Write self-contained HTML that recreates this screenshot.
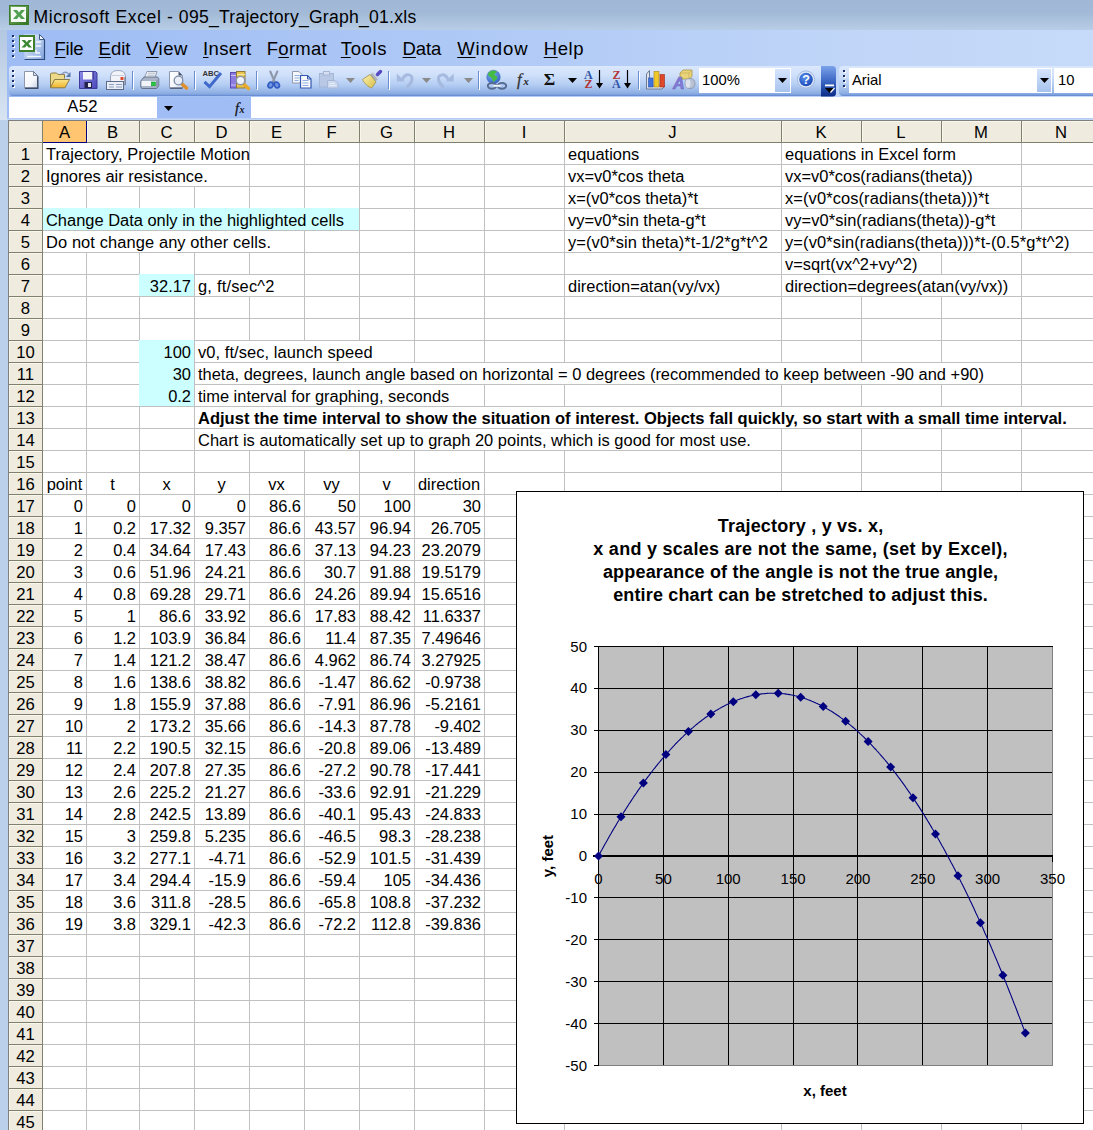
<!DOCTYPE html>
<html lang="en"><head><meta charset="utf-8"><title>Microsoft Excel - 095_Trajectory_Graph_01.xls</title>
<style>
*{box-sizing:border-box;margin:0;padding:0}
html,body{width:1093px;height:1130px;overflow:hidden;background:#fff}
body{position:relative;font-family:"Liberation Sans",Arial,sans-serif;font-size:16.67px;color:#000}
.abs,.abs>*{position:absolute}
#win{position:absolute;left:0;top:0;width:1093px;height:1130px;overflow:hidden}
#win>div,#win>svg{position:absolute}
#lb{left:0;top:0;width:8px;height:1130px;background:#bbd0ea}
#lb2{left:0;top:30px;width:7px;height:90px;background:linear-gradient(#b3c7e2,#c6d6ea 50%,#d8e4f2)}
#title{left:0;top:0;width:1093px;height:30px;background:linear-gradient(#a0b7d5 0,#a2bad7 42%,#b8cde6 100%)}
#title span{position:absolute;left:33.5px;top:5px;font-size:17.6px;line-height:24px;white-space:nowrap}
#menu{left:7px;top:30px;width:1086px;height:36px;background:linear-gradient(90deg,#9ebcf4 0,#afc9f6 42%,#c1d6f8 80%,#c6daf9 100%)}
#menu span{position:absolute;top:7px;font-size:18.5px;line-height:24px;white-space:nowrap}
#menu u{text-decoration:underline;text-underline-offset:2px;text-decoration-thickness:1px}
.tbar{height:30px;top:66px;border-radius:4px 0 0 4px;background:linear-gradient(#dbe8fc,#cfe0fa 30%,#b7cff4 60%,#8fb0e4 90%,#7c9fdc 96%,#5b82cc)}
#tb{left:9px;width:815px}
#tb2{left:839px;width:254px}
#tbbg{left:7px;top:64px;width:1086px;height:33px;background:linear-gradient(90deg,#9ebcf4 0,#afc9f6 42%,#c1d6f8 80%,#c6daf9 100%)}
#fbar{left:7px;top:97px;width:1086px;height:23px;background:#a0bef5}
#fbar div{position:absolute}
.ui{position:absolute;font-size:14.8px;line-height:20px;white-space:nowrap}
.hdr{background:#efebde}
#grid{left:0;top:0;width:1093px;height:1130px}
#grid div{position:absolute}
.ch{top:121px;height:21px;line-height:24px;text-align:center;font-size:16.67px}
.rh{box-shadow:inset 1px 1px 0 #f9f6ea;left:9px;width:33px;height:21px;line-height:24px;text-align:center;font-size:16.67px;background:#efebde}
.t{height:22px;line-height:23px;white-space:nowrap;font-size:16.45px}
.b{font-size:16.52px}
.r{text-align:right}
.c{text-align:center}
.b{font-weight:bold}
.hl{background:#ccffff}
.vl{width:1px;background:#c0c0c0}
.hline{height:1px;background:#c0c0c0}
</style></head><body><div id="win">

<div id="grid">
<div style="left:9px;top:120px;width:1084px;height:1010px;background:#fff"></div>
<div class="hdr" style="left:9px;top:121px;width:1084px;height:21px"></div>
<div class="hdr" style="left:9px;top:143px;width:33px;height:987px"></div>
<div class="hline" style="left:43px;top:164px;width:1050px"></div>
<div class="hline" style="left:43px;top:186px;width:1050px"></div>
<div class="hline" style="left:43px;top:208px;width:1050px"></div>
<div class="hline" style="left:43px;top:230px;width:1050px"></div>
<div class="hline" style="left:43px;top:252px;width:1050px"></div>
<div class="hline" style="left:43px;top:274px;width:1050px"></div>
<div class="hline" style="left:43px;top:296px;width:1050px"></div>
<div class="hline" style="left:43px;top:318px;width:1050px"></div>
<div class="hline" style="left:43px;top:340px;width:1050px"></div>
<div class="hline" style="left:43px;top:362px;width:1050px"></div>
<div class="hline" style="left:43px;top:384px;width:1050px"></div>
<div class="hline" style="left:43px;top:406px;width:1050px"></div>
<div class="hline" style="left:43px;top:428px;width:1050px"></div>
<div class="hline" style="left:43px;top:450px;width:1050px"></div>
<div class="hline" style="left:43px;top:472px;width:1050px"></div>
<div class="hline" style="left:43px;top:494px;width:1050px"></div>
<div class="hline" style="left:43px;top:516px;width:1050px"></div>
<div class="hline" style="left:43px;top:538px;width:1050px"></div>
<div class="hline" style="left:43px;top:560px;width:1050px"></div>
<div class="hline" style="left:43px;top:582px;width:1050px"></div>
<div class="hline" style="left:43px;top:604px;width:1050px"></div>
<div class="hline" style="left:43px;top:626px;width:1050px"></div>
<div class="hline" style="left:43px;top:648px;width:1050px"></div>
<div class="hline" style="left:43px;top:670px;width:1050px"></div>
<div class="hline" style="left:43px;top:692px;width:1050px"></div>
<div class="hline" style="left:43px;top:714px;width:1050px"></div>
<div class="hline" style="left:43px;top:736px;width:1050px"></div>
<div class="hline" style="left:43px;top:758px;width:1050px"></div>
<div class="hline" style="left:43px;top:780px;width:1050px"></div>
<div class="hline" style="left:43px;top:802px;width:1050px"></div>
<div class="hline" style="left:43px;top:824px;width:1050px"></div>
<div class="hline" style="left:43px;top:846px;width:1050px"></div>
<div class="hline" style="left:43px;top:868px;width:1050px"></div>
<div class="hline" style="left:43px;top:890px;width:1050px"></div>
<div class="hline" style="left:43px;top:912px;width:1050px"></div>
<div class="hline" style="left:43px;top:934px;width:1050px"></div>
<div class="hline" style="left:43px;top:956px;width:1050px"></div>
<div class="hline" style="left:43px;top:978px;width:1050px"></div>
<div class="hline" style="left:43px;top:1000px;width:1050px"></div>
<div class="hline" style="left:43px;top:1022px;width:1050px"></div>
<div class="hline" style="left:43px;top:1044px;width:1050px"></div>
<div class="hline" style="left:43px;top:1066px;width:1050px"></div>
<div class="hline" style="left:43px;top:1088px;width:1050px"></div>
<div class="hline" style="left:43px;top:1110px;width:1050px"></div>
<div class="hline" style="left:43px;top:1132px;width:1050px"></div>
<div class="vl" style="left:86px;top:187px;height:22px"></div>
<div class="vl" style="left:86px;top:253px;height:880px"></div>
<div class="vl" style="left:139px;top:187px;height:22px"></div>
<div class="vl" style="left:139px;top:253px;height:880px"></div>
<div class="vl" style="left:194px;top:187px;height:22px"></div>
<div class="vl" style="left:194px;top:253px;height:880px"></div>
<div class="vl" style="left:249px;top:143px;height:66px"></div>
<div class="vl" style="left:249px;top:253px;height:22px"></div>
<div class="vl" style="left:249px;top:297px;height:44px"></div>
<div class="vl" style="left:249px;top:451px;height:682px"></div>
<div class="vl" style="left:304px;top:143px;height:66px"></div>
<div class="vl" style="left:304px;top:231px;height:110px"></div>
<div class="vl" style="left:304px;top:451px;height:682px"></div>
<div class="vl" style="left:359px;top:143px;height:198px"></div>
<div class="vl" style="left:359px;top:451px;height:682px"></div>
<div class="vl" style="left:414px;top:143px;height:220px"></div>
<div class="vl" style="left:414px;top:451px;height:682px"></div>
<div class="vl" style="left:484px;top:143px;height:220px"></div>
<div class="vl" style="left:484px;top:385px;height:22px"></div>
<div class="vl" style="left:484px;top:451px;height:682px"></div>
<div class="vl" style="left:564px;top:143px;height:220px"></div>
<div class="vl" style="left:564px;top:385px;height:22px"></div>
<div class="vl" style="left:564px;top:451px;height:682px"></div>
<div class="vl" style="left:781px;top:143px;height:220px"></div>
<div class="vl" style="left:781px;top:385px;height:22px"></div>
<div class="vl" style="left:781px;top:429px;height:704px"></div>
<div class="vl" style="left:861px;top:297px;height:66px"></div>
<div class="vl" style="left:861px;top:385px;height:22px"></div>
<div class="vl" style="left:861px;top:429px;height:704px"></div>
<div class="vl" style="left:941px;top:253px;height:22px"></div>
<div class="vl" style="left:941px;top:297px;height:66px"></div>
<div class="vl" style="left:941px;top:385px;height:22px"></div>
<div class="vl" style="left:941px;top:429px;height:704px"></div>
<div class="vl" style="left:1021px;top:143px;height:88px"></div>
<div class="vl" style="left:1021px;top:253px;height:154px"></div>
<div class="vl" style="left:1021px;top:429px;height:704px"></div>
<div class="hl" style="left:43px;top:208px;width:316px;height:22px"></div>
<div class="hl" style="left:139px;top:274px;width:55px;height:22px"></div>
<div class="hl" style="left:139px;top:340px;width:55px;height:66px"></div>
<div style="left:8px;top:120px;width:1085px;height:1px;background:#7f7f7f"></div>
<div style="left:8px;top:120px;width:1px;height:1010px;background:#7f7f7f"></div>
<div style="left:9px;top:142px;width:1084px;height:1px;background:#80806f"></div>
<div style="left:42px;top:121px;width:1px;height:1009px;background:#80806f"></div>
<div style="left:43px;top:121px;width:43px;height:21px;background:#ffc571"></div>
<div style="left:86px;top:121px;width:1px;height:22px;background:#000080"></div>
<div style="left:43px;top:142px;width:43px;height:1px;background:#000080"></div>
<div class="ch" style="left:43px;width:43px">A</div>
<div style="left:87px;top:121px;width:52px;height:1px;background:#f9f6ea"></div><div style="left:87px;top:121px;width:1px;height:21px;background:#f9f6ea"></div>
<div style="left:139px;top:121px;width:1px;height:21px;background:#80806f"></div>
<div class="ch" style="left:86px;width:53px">B</div>
<div style="left:140px;top:121px;width:54px;height:1px;background:#f9f6ea"></div><div style="left:140px;top:121px;width:1px;height:21px;background:#f9f6ea"></div>
<div style="left:194px;top:121px;width:1px;height:21px;background:#80806f"></div>
<div class="ch" style="left:139px;width:55px">C</div>
<div style="left:195px;top:121px;width:54px;height:1px;background:#f9f6ea"></div><div style="left:195px;top:121px;width:1px;height:21px;background:#f9f6ea"></div>
<div style="left:249px;top:121px;width:1px;height:21px;background:#80806f"></div>
<div class="ch" style="left:194px;width:55px">D</div>
<div style="left:250px;top:121px;width:54px;height:1px;background:#f9f6ea"></div><div style="left:250px;top:121px;width:1px;height:21px;background:#f9f6ea"></div>
<div style="left:304px;top:121px;width:1px;height:21px;background:#80806f"></div>
<div class="ch" style="left:249px;width:55px">E</div>
<div style="left:305px;top:121px;width:54px;height:1px;background:#f9f6ea"></div><div style="left:305px;top:121px;width:1px;height:21px;background:#f9f6ea"></div>
<div style="left:359px;top:121px;width:1px;height:21px;background:#80806f"></div>
<div class="ch" style="left:304px;width:55px">F</div>
<div style="left:360px;top:121px;width:54px;height:1px;background:#f9f6ea"></div><div style="left:360px;top:121px;width:1px;height:21px;background:#f9f6ea"></div>
<div style="left:414px;top:121px;width:1px;height:21px;background:#80806f"></div>
<div class="ch" style="left:359px;width:55px">G</div>
<div style="left:415px;top:121px;width:69px;height:1px;background:#f9f6ea"></div><div style="left:415px;top:121px;width:1px;height:21px;background:#f9f6ea"></div>
<div style="left:484px;top:121px;width:1px;height:21px;background:#80806f"></div>
<div class="ch" style="left:414px;width:70px">H</div>
<div style="left:485px;top:121px;width:79px;height:1px;background:#f9f6ea"></div><div style="left:485px;top:121px;width:1px;height:21px;background:#f9f6ea"></div>
<div style="left:564px;top:121px;width:1px;height:21px;background:#80806f"></div>
<div class="ch" style="left:484px;width:80px">I</div>
<div style="left:565px;top:121px;width:216px;height:1px;background:#f9f6ea"></div><div style="left:565px;top:121px;width:1px;height:21px;background:#f9f6ea"></div>
<div style="left:781px;top:121px;width:1px;height:21px;background:#80806f"></div>
<div class="ch" style="left:564px;width:217px">J</div>
<div style="left:782px;top:121px;width:79px;height:1px;background:#f9f6ea"></div><div style="left:782px;top:121px;width:1px;height:21px;background:#f9f6ea"></div>
<div style="left:861px;top:121px;width:1px;height:21px;background:#80806f"></div>
<div class="ch" style="left:781px;width:80px">K</div>
<div style="left:862px;top:121px;width:79px;height:1px;background:#f9f6ea"></div><div style="left:862px;top:121px;width:1px;height:21px;background:#f9f6ea"></div>
<div style="left:941px;top:121px;width:1px;height:21px;background:#80806f"></div>
<div class="ch" style="left:861px;width:80px">L</div>
<div style="left:942px;top:121px;width:79px;height:1px;background:#f9f6ea"></div><div style="left:942px;top:121px;width:1px;height:21px;background:#f9f6ea"></div>
<div style="left:1021px;top:121px;width:1px;height:21px;background:#80806f"></div>
<div class="ch" style="left:941px;width:80px">M</div>
<div style="left:1022px;top:121px;width:71px;height:1px;background:#f9f6ea"></div><div style="left:1022px;top:121px;width:1px;height:21px;background:#f9f6ea"></div>
<div class="ch" style="left:1021px;width:80px">N</div>
<div class="rh" style="top:143px">1</div>
<div style="left:9px;top:164px;width:33px;height:1px;background:#80806f"></div>
<div class="rh" style="top:165px">2</div>
<div style="left:9px;top:186px;width:33px;height:1px;background:#80806f"></div>
<div class="rh" style="top:187px">3</div>
<div style="left:9px;top:208px;width:33px;height:1px;background:#80806f"></div>
<div class="rh" style="top:209px">4</div>
<div style="left:9px;top:230px;width:33px;height:1px;background:#80806f"></div>
<div class="rh" style="top:231px">5</div>
<div style="left:9px;top:252px;width:33px;height:1px;background:#80806f"></div>
<div class="rh" style="top:253px">6</div>
<div style="left:9px;top:274px;width:33px;height:1px;background:#80806f"></div>
<div class="rh" style="top:275px">7</div>
<div style="left:9px;top:296px;width:33px;height:1px;background:#80806f"></div>
<div class="rh" style="top:297px">8</div>
<div style="left:9px;top:318px;width:33px;height:1px;background:#80806f"></div>
<div class="rh" style="top:319px">9</div>
<div style="left:9px;top:340px;width:33px;height:1px;background:#80806f"></div>
<div class="rh" style="top:341px">10</div>
<div style="left:9px;top:362px;width:33px;height:1px;background:#80806f"></div>
<div class="rh" style="top:363px">11</div>
<div style="left:9px;top:384px;width:33px;height:1px;background:#80806f"></div>
<div class="rh" style="top:385px">12</div>
<div style="left:9px;top:406px;width:33px;height:1px;background:#80806f"></div>
<div class="rh" style="top:407px">13</div>
<div style="left:9px;top:428px;width:33px;height:1px;background:#80806f"></div>
<div class="rh" style="top:429px">14</div>
<div style="left:9px;top:450px;width:33px;height:1px;background:#80806f"></div>
<div class="rh" style="top:451px">15</div>
<div style="left:9px;top:472px;width:33px;height:1px;background:#80806f"></div>
<div class="rh" style="top:473px">16</div>
<div style="left:9px;top:494px;width:33px;height:1px;background:#80806f"></div>
<div class="rh" style="top:495px">17</div>
<div style="left:9px;top:516px;width:33px;height:1px;background:#80806f"></div>
<div class="rh" style="top:517px">18</div>
<div style="left:9px;top:538px;width:33px;height:1px;background:#80806f"></div>
<div class="rh" style="top:539px">19</div>
<div style="left:9px;top:560px;width:33px;height:1px;background:#80806f"></div>
<div class="rh" style="top:561px">20</div>
<div style="left:9px;top:582px;width:33px;height:1px;background:#80806f"></div>
<div class="rh" style="top:583px">21</div>
<div style="left:9px;top:604px;width:33px;height:1px;background:#80806f"></div>
<div class="rh" style="top:605px">22</div>
<div style="left:9px;top:626px;width:33px;height:1px;background:#80806f"></div>
<div class="rh" style="top:627px">23</div>
<div style="left:9px;top:648px;width:33px;height:1px;background:#80806f"></div>
<div class="rh" style="top:649px">24</div>
<div style="left:9px;top:670px;width:33px;height:1px;background:#80806f"></div>
<div class="rh" style="top:671px">25</div>
<div style="left:9px;top:692px;width:33px;height:1px;background:#80806f"></div>
<div class="rh" style="top:693px">26</div>
<div style="left:9px;top:714px;width:33px;height:1px;background:#80806f"></div>
<div class="rh" style="top:715px">27</div>
<div style="left:9px;top:736px;width:33px;height:1px;background:#80806f"></div>
<div class="rh" style="top:737px">28</div>
<div style="left:9px;top:758px;width:33px;height:1px;background:#80806f"></div>
<div class="rh" style="top:759px">29</div>
<div style="left:9px;top:780px;width:33px;height:1px;background:#80806f"></div>
<div class="rh" style="top:781px">30</div>
<div style="left:9px;top:802px;width:33px;height:1px;background:#80806f"></div>
<div class="rh" style="top:803px">31</div>
<div style="left:9px;top:824px;width:33px;height:1px;background:#80806f"></div>
<div class="rh" style="top:825px">32</div>
<div style="left:9px;top:846px;width:33px;height:1px;background:#80806f"></div>
<div class="rh" style="top:847px">33</div>
<div style="left:9px;top:868px;width:33px;height:1px;background:#80806f"></div>
<div class="rh" style="top:869px">34</div>
<div style="left:9px;top:890px;width:33px;height:1px;background:#80806f"></div>
<div class="rh" style="top:891px">35</div>
<div style="left:9px;top:912px;width:33px;height:1px;background:#80806f"></div>
<div class="rh" style="top:913px">36</div>
<div style="left:9px;top:934px;width:33px;height:1px;background:#80806f"></div>
<div class="rh" style="top:935px">37</div>
<div style="left:9px;top:956px;width:33px;height:1px;background:#80806f"></div>
<div class="rh" style="top:957px">38</div>
<div style="left:9px;top:978px;width:33px;height:1px;background:#80806f"></div>
<div class="rh" style="top:979px">39</div>
<div style="left:9px;top:1000px;width:33px;height:1px;background:#80806f"></div>
<div class="rh" style="top:1001px">40</div>
<div style="left:9px;top:1022px;width:33px;height:1px;background:#80806f"></div>
<div class="rh" style="top:1023px">41</div>
<div style="left:9px;top:1044px;width:33px;height:1px;background:#80806f"></div>
<div class="rh" style="top:1045px">42</div>
<div style="left:9px;top:1066px;width:33px;height:1px;background:#80806f"></div>
<div class="rh" style="top:1067px">43</div>
<div style="left:9px;top:1088px;width:33px;height:1px;background:#80806f"></div>
<div class="rh" style="top:1089px">44</div>
<div style="left:9px;top:1110px;width:33px;height:1px;background:#80806f"></div>
<div class="rh" style="top:1111px">45</div>
<div style="left:9px;top:1132px;width:33px;height:1px;background:#80806f"></div>
<div class="t " style="left:46px;top:143px;letter-spacing:0.07px">Trajectory, Projectile Motion</div>
<div class="t " style="left:46px;top:165px">Ignores air resistance.</div>
<div class="t " style="left:46px;top:209px">Change Data only in the highlighted cells</div>
<div class="t " style="left:46px;top:231px;letter-spacing:0.1px">Do not change any other cells.</div>
<div class="t r" style="left:139px;top:275px;width:55px;padding-right:3px">32.17</div>
<div class="t " style="left:198px;top:275px;letter-spacing:0.2px">g, ft/sec^2</div>
<div class="t r" style="left:139px;top:341px;width:55px;padding-right:3px">100</div>
<div class="t " style="left:198px;top:341px;letter-spacing:0.08px">v0, ft/sec, launch speed</div>
<div class="t r" style="left:139px;top:363px;width:55px;padding-right:3px">30</div>
<div class="t " style="left:198px;top:363px">theta, degrees, launch angle based on horizontal = 0 degrees (recommended to keep between -90 and +90)</div>
<div class="t r" style="left:139px;top:385px;width:55px;padding-right:3px">0.2</div>
<div class="t " style="left:198px;top:385px">time interval for graphing, seconds</div>
<div class="t b" style="left:198px;top:407px">Adjust the time interval to show the situation of interest. Objects fall quickly, so start with a small time interval.</div>
<div class="t " style="left:198px;top:429px;letter-spacing:0.026px">Chart is automatically set up to graph 20 points, which is good for most use.</div>
<div class="t " style="left:568px;top:143px">equations</div>
<div class="t " style="left:568px;top:165px">vx=v0*cos theta</div>
<div class="t " style="left:568px;top:187px">x=(v0*cos theta)*t</div>
<div class="t " style="left:568px;top:209px">vy=v0*sin theta-g*t</div>
<div class="t " style="left:568px;top:231px;letter-spacing:0.1px">y=(v0*sin theta)*t-1/2*g*t^2</div>
<div class="t " style="left:568px;top:275px">direction=atan(vy/vx)</div>
<div class="t " style="left:785px;top:143px">equations in Excel form</div>
<div class="t " style="left:785px;top:165px">vx=v0*cos(radians(theta))</div>
<div class="t " style="left:785px;top:187px;letter-spacing:0.1px">x=(v0*cos(radians(theta)))*t</div>
<div class="t " style="left:785px;top:209px;letter-spacing:0.06px">vy=v0*sin(radians(theta))-g*t</div>
<div class="t " style="left:785px;top:231px;letter-spacing:0.125px">y=(v0*sin(radians(theta)))*t-(0.5*g*t^2)</div>
<div class="t " style="left:785px;top:253px">v=sqrt(vx^2+vy^2)</div>
<div class="t " style="left:785px;top:275px;letter-spacing:0.03px">direction=degrees(atan(vy/vx))</div>
<div class="t c" style="left:43px;top:473px;width:43px;">point</div>
<div class="t c" style="left:86px;top:473px;width:53px;">t</div>
<div class="t c" style="left:139px;top:473px;width:55px;">x</div>
<div class="t c" style="left:194px;top:473px;width:55px;">y</div>
<div class="t c" style="left:249px;top:473px;width:55px;">vx</div>
<div class="t c" style="left:304px;top:473px;width:55px;">vy</div>
<div class="t c" style="left:359px;top:473px;width:55px;">v</div>
<div class="t c" style="left:414px;top:473px;width:70px;">direction</div>
<div class="t r" style="left:43px;top:495px;width:43px;padding-right:3px">0</div>
<div class="t r" style="left:86px;top:495px;width:53px;padding-right:3px">0</div>
<div class="t r" style="left:139px;top:495px;width:55px;padding-right:3px">0</div>
<div class="t r" style="left:194px;top:495px;width:55px;padding-right:3px">0</div>
<div class="t r" style="left:249px;top:495px;width:55px;padding-right:3px">86.6</div>
<div class="t r" style="left:304px;top:495px;width:55px;padding-right:3px">50</div>
<div class="t r" style="left:359px;top:495px;width:55px;padding-right:3px">100</div>
<div class="t r" style="left:414px;top:495px;width:70px;padding-right:3px">30</div>
<div class="t r" style="left:43px;top:517px;width:43px;padding-right:3px">1</div>
<div class="t r" style="left:86px;top:517px;width:53px;padding-right:3px">0.2</div>
<div class="t r" style="left:139px;top:517px;width:55px;padding-right:3px">17.32</div>
<div class="t r" style="left:194px;top:517px;width:55px;padding-right:3px">9.357</div>
<div class="t r" style="left:249px;top:517px;width:55px;padding-right:3px">86.6</div>
<div class="t r" style="left:304px;top:517px;width:55px;padding-right:3px">43.57</div>
<div class="t r" style="left:359px;top:517px;width:55px;padding-right:3px">96.94</div>
<div class="t r" style="left:414px;top:517px;width:70px;padding-right:3px">26.705</div>
<div class="t r" style="left:43px;top:539px;width:43px;padding-right:3px">2</div>
<div class="t r" style="left:86px;top:539px;width:53px;padding-right:3px">0.4</div>
<div class="t r" style="left:139px;top:539px;width:55px;padding-right:3px">34.64</div>
<div class="t r" style="left:194px;top:539px;width:55px;padding-right:3px">17.43</div>
<div class="t r" style="left:249px;top:539px;width:55px;padding-right:3px">86.6</div>
<div class="t r" style="left:304px;top:539px;width:55px;padding-right:3px">37.13</div>
<div class="t r" style="left:359px;top:539px;width:55px;padding-right:3px">94.23</div>
<div class="t r" style="left:414px;top:539px;width:70px;padding-right:3px">23.2079</div>
<div class="t r" style="left:43px;top:561px;width:43px;padding-right:3px">3</div>
<div class="t r" style="left:86px;top:561px;width:53px;padding-right:3px">0.6</div>
<div class="t r" style="left:139px;top:561px;width:55px;padding-right:3px">51.96</div>
<div class="t r" style="left:194px;top:561px;width:55px;padding-right:3px">24.21</div>
<div class="t r" style="left:249px;top:561px;width:55px;padding-right:3px">86.6</div>
<div class="t r" style="left:304px;top:561px;width:55px;padding-right:3px">30.7</div>
<div class="t r" style="left:359px;top:561px;width:55px;padding-right:3px">91.88</div>
<div class="t r" style="left:414px;top:561px;width:70px;padding-right:3px">19.5179</div>
<div class="t r" style="left:43px;top:583px;width:43px;padding-right:3px">4</div>
<div class="t r" style="left:86px;top:583px;width:53px;padding-right:3px">0.8</div>
<div class="t r" style="left:139px;top:583px;width:55px;padding-right:3px">69.28</div>
<div class="t r" style="left:194px;top:583px;width:55px;padding-right:3px">29.71</div>
<div class="t r" style="left:249px;top:583px;width:55px;padding-right:3px">86.6</div>
<div class="t r" style="left:304px;top:583px;width:55px;padding-right:3px">24.26</div>
<div class="t r" style="left:359px;top:583px;width:55px;padding-right:3px">89.94</div>
<div class="t r" style="left:414px;top:583px;width:70px;padding-right:3px">15.6516</div>
<div class="t r" style="left:43px;top:605px;width:43px;padding-right:3px">5</div>
<div class="t r" style="left:86px;top:605px;width:53px;padding-right:3px">1</div>
<div class="t r" style="left:139px;top:605px;width:55px;padding-right:3px">86.6</div>
<div class="t r" style="left:194px;top:605px;width:55px;padding-right:3px">33.92</div>
<div class="t r" style="left:249px;top:605px;width:55px;padding-right:3px">86.6</div>
<div class="t r" style="left:304px;top:605px;width:55px;padding-right:3px">17.83</div>
<div class="t r" style="left:359px;top:605px;width:55px;padding-right:3px">88.42</div>
<div class="t r" style="left:414px;top:605px;width:70px;padding-right:3px">11.6337</div>
<div class="t r" style="left:43px;top:627px;width:43px;padding-right:3px">6</div>
<div class="t r" style="left:86px;top:627px;width:53px;padding-right:3px">1.2</div>
<div class="t r" style="left:139px;top:627px;width:55px;padding-right:3px">103.9</div>
<div class="t r" style="left:194px;top:627px;width:55px;padding-right:3px">36.84</div>
<div class="t r" style="left:249px;top:627px;width:55px;padding-right:3px">86.6</div>
<div class="t r" style="left:304px;top:627px;width:55px;padding-right:3px">11.4</div>
<div class="t r" style="left:359px;top:627px;width:55px;padding-right:3px">87.35</div>
<div class="t r" style="left:414px;top:627px;width:70px;padding-right:3px">7.49646</div>
<div class="t r" style="left:43px;top:649px;width:43px;padding-right:3px">7</div>
<div class="t r" style="left:86px;top:649px;width:53px;padding-right:3px">1.4</div>
<div class="t r" style="left:139px;top:649px;width:55px;padding-right:3px">121.2</div>
<div class="t r" style="left:194px;top:649px;width:55px;padding-right:3px">38.47</div>
<div class="t r" style="left:249px;top:649px;width:55px;padding-right:3px">86.6</div>
<div class="t r" style="left:304px;top:649px;width:55px;padding-right:3px">4.962</div>
<div class="t r" style="left:359px;top:649px;width:55px;padding-right:3px">86.74</div>
<div class="t r" style="left:414px;top:649px;width:70px;padding-right:3px">3.27925</div>
<div class="t r" style="left:43px;top:671px;width:43px;padding-right:3px">8</div>
<div class="t r" style="left:86px;top:671px;width:53px;padding-right:3px">1.6</div>
<div class="t r" style="left:139px;top:671px;width:55px;padding-right:3px">138.6</div>
<div class="t r" style="left:194px;top:671px;width:55px;padding-right:3px">38.82</div>
<div class="t r" style="left:249px;top:671px;width:55px;padding-right:3px">86.6</div>
<div class="t r" style="left:304px;top:671px;width:55px;padding-right:3px">-1.47</div>
<div class="t r" style="left:359px;top:671px;width:55px;padding-right:3px">86.62</div>
<div class="t r" style="left:414px;top:671px;width:70px;padding-right:3px">-0.9738</div>
<div class="t r" style="left:43px;top:693px;width:43px;padding-right:3px">9</div>
<div class="t r" style="left:86px;top:693px;width:53px;padding-right:3px">1.8</div>
<div class="t r" style="left:139px;top:693px;width:55px;padding-right:3px">155.9</div>
<div class="t r" style="left:194px;top:693px;width:55px;padding-right:3px">37.88</div>
<div class="t r" style="left:249px;top:693px;width:55px;padding-right:3px">86.6</div>
<div class="t r" style="left:304px;top:693px;width:55px;padding-right:3px">-7.91</div>
<div class="t r" style="left:359px;top:693px;width:55px;padding-right:3px">86.96</div>
<div class="t r" style="left:414px;top:693px;width:70px;padding-right:3px">-5.2161</div>
<div class="t r" style="left:43px;top:715px;width:43px;padding-right:3px">10</div>
<div class="t r" style="left:86px;top:715px;width:53px;padding-right:3px">2</div>
<div class="t r" style="left:139px;top:715px;width:55px;padding-right:3px">173.2</div>
<div class="t r" style="left:194px;top:715px;width:55px;padding-right:3px">35.66</div>
<div class="t r" style="left:249px;top:715px;width:55px;padding-right:3px">86.6</div>
<div class="t r" style="left:304px;top:715px;width:55px;padding-right:3px">-14.3</div>
<div class="t r" style="left:359px;top:715px;width:55px;padding-right:3px">87.78</div>
<div class="t r" style="left:414px;top:715px;width:70px;padding-right:3px">-9.402</div>
<div class="t r" style="left:43px;top:737px;width:43px;padding-right:3px">11</div>
<div class="t r" style="left:86px;top:737px;width:53px;padding-right:3px">2.2</div>
<div class="t r" style="left:139px;top:737px;width:55px;padding-right:3px">190.5</div>
<div class="t r" style="left:194px;top:737px;width:55px;padding-right:3px">32.15</div>
<div class="t r" style="left:249px;top:737px;width:55px;padding-right:3px">86.6</div>
<div class="t r" style="left:304px;top:737px;width:55px;padding-right:3px">-20.8</div>
<div class="t r" style="left:359px;top:737px;width:55px;padding-right:3px">89.06</div>
<div class="t r" style="left:414px;top:737px;width:70px;padding-right:3px">-13.489</div>
<div class="t r" style="left:43px;top:759px;width:43px;padding-right:3px">12</div>
<div class="t r" style="left:86px;top:759px;width:53px;padding-right:3px">2.4</div>
<div class="t r" style="left:139px;top:759px;width:55px;padding-right:3px">207.8</div>
<div class="t r" style="left:194px;top:759px;width:55px;padding-right:3px">27.35</div>
<div class="t r" style="left:249px;top:759px;width:55px;padding-right:3px">86.6</div>
<div class="t r" style="left:304px;top:759px;width:55px;padding-right:3px">-27.2</div>
<div class="t r" style="left:359px;top:759px;width:55px;padding-right:3px">90.78</div>
<div class="t r" style="left:414px;top:759px;width:70px;padding-right:3px">-17.441</div>
<div class="t r" style="left:43px;top:781px;width:43px;padding-right:3px">13</div>
<div class="t r" style="left:86px;top:781px;width:53px;padding-right:3px">2.6</div>
<div class="t r" style="left:139px;top:781px;width:55px;padding-right:3px">225.2</div>
<div class="t r" style="left:194px;top:781px;width:55px;padding-right:3px">21.27</div>
<div class="t r" style="left:249px;top:781px;width:55px;padding-right:3px">86.6</div>
<div class="t r" style="left:304px;top:781px;width:55px;padding-right:3px">-33.6</div>
<div class="t r" style="left:359px;top:781px;width:55px;padding-right:3px">92.91</div>
<div class="t r" style="left:414px;top:781px;width:70px;padding-right:3px">-21.229</div>
<div class="t r" style="left:43px;top:803px;width:43px;padding-right:3px">14</div>
<div class="t r" style="left:86px;top:803px;width:53px;padding-right:3px">2.8</div>
<div class="t r" style="left:139px;top:803px;width:55px;padding-right:3px">242.5</div>
<div class="t r" style="left:194px;top:803px;width:55px;padding-right:3px">13.89</div>
<div class="t r" style="left:249px;top:803px;width:55px;padding-right:3px">86.6</div>
<div class="t r" style="left:304px;top:803px;width:55px;padding-right:3px">-40.1</div>
<div class="t r" style="left:359px;top:803px;width:55px;padding-right:3px">95.43</div>
<div class="t r" style="left:414px;top:803px;width:70px;padding-right:3px">-24.833</div>
<div class="t r" style="left:43px;top:825px;width:43px;padding-right:3px">15</div>
<div class="t r" style="left:86px;top:825px;width:53px;padding-right:3px">3</div>
<div class="t r" style="left:139px;top:825px;width:55px;padding-right:3px">259.8</div>
<div class="t r" style="left:194px;top:825px;width:55px;padding-right:3px">5.235</div>
<div class="t r" style="left:249px;top:825px;width:55px;padding-right:3px">86.6</div>
<div class="t r" style="left:304px;top:825px;width:55px;padding-right:3px">-46.5</div>
<div class="t r" style="left:359px;top:825px;width:55px;padding-right:3px">98.3</div>
<div class="t r" style="left:414px;top:825px;width:70px;padding-right:3px">-28.238</div>
<div class="t r" style="left:43px;top:847px;width:43px;padding-right:3px">16</div>
<div class="t r" style="left:86px;top:847px;width:53px;padding-right:3px">3.2</div>
<div class="t r" style="left:139px;top:847px;width:55px;padding-right:3px">277.1</div>
<div class="t r" style="left:194px;top:847px;width:55px;padding-right:3px">-4.71</div>
<div class="t r" style="left:249px;top:847px;width:55px;padding-right:3px">86.6</div>
<div class="t r" style="left:304px;top:847px;width:55px;padding-right:3px">-52.9</div>
<div class="t r" style="left:359px;top:847px;width:55px;padding-right:3px">101.5</div>
<div class="t r" style="left:414px;top:847px;width:70px;padding-right:3px">-31.439</div>
<div class="t r" style="left:43px;top:869px;width:43px;padding-right:3px">17</div>
<div class="t r" style="left:86px;top:869px;width:53px;padding-right:3px">3.4</div>
<div class="t r" style="left:139px;top:869px;width:55px;padding-right:3px">294.4</div>
<div class="t r" style="left:194px;top:869px;width:55px;padding-right:3px">-15.9</div>
<div class="t r" style="left:249px;top:869px;width:55px;padding-right:3px">86.6</div>
<div class="t r" style="left:304px;top:869px;width:55px;padding-right:3px">-59.4</div>
<div class="t r" style="left:359px;top:869px;width:55px;padding-right:3px">105</div>
<div class="t r" style="left:414px;top:869px;width:70px;padding-right:3px">-34.436</div>
<div class="t r" style="left:43px;top:891px;width:43px;padding-right:3px">18</div>
<div class="t r" style="left:86px;top:891px;width:53px;padding-right:3px">3.6</div>
<div class="t r" style="left:139px;top:891px;width:55px;padding-right:3px">311.8</div>
<div class="t r" style="left:194px;top:891px;width:55px;padding-right:3px">-28.5</div>
<div class="t r" style="left:249px;top:891px;width:55px;padding-right:3px">86.6</div>
<div class="t r" style="left:304px;top:891px;width:55px;padding-right:3px">-65.8</div>
<div class="t r" style="left:359px;top:891px;width:55px;padding-right:3px">108.8</div>
<div class="t r" style="left:414px;top:891px;width:70px;padding-right:3px">-37.232</div>
<div class="t r" style="left:43px;top:913px;width:43px;padding-right:3px">19</div>
<div class="t r" style="left:86px;top:913px;width:53px;padding-right:3px">3.8</div>
<div class="t r" style="left:139px;top:913px;width:55px;padding-right:3px">329.1</div>
<div class="t r" style="left:194px;top:913px;width:55px;padding-right:3px">-42.3</div>
<div class="t r" style="left:249px;top:913px;width:55px;padding-right:3px">86.6</div>
<div class="t r" style="left:304px;top:913px;width:55px;padding-right:3px">-72.2</div>
<div class="t r" style="left:359px;top:913px;width:55px;padding-right:3px">112.8</div>
<div class="t r" style="left:414px;top:913px;width:70px;padding-right:3px">-39.836</div>
</div>
<svg style="left:0;top:0" width="1093" height="1130" viewBox="0 0 1093 1130" font-family="Liberation Sans,Arial,sans-serif">
<rect x="516.5" y="491.5" width="567" height="632" fill="#fff" stroke="#000" stroke-width="1"/>
<rect x="598.5" y="646.5" width="454.0" height="419.0" fill="#c0c0c0" stroke="#808080" stroke-width="1"/>
<path d="M598.5 646.5V1065.5M663.5 646.5V1065.5M728.5 646.5V1065.5M793.5 646.5V1065.5M857.5 646.5V1065.5M922.5 646.5V1065.5M987.5 646.5V1065.5M1052.5 646.5V1065.5M593.5 646.5H1052.5M593.5 688.5H1052.5M593.5 730.5H1052.5M593.5 772.5H1052.5M593.5 814.5H1052.5M593.5 856.5H1052.5M593.5 897.5H1052.5M593.5 939.5H1052.5M593.5 981.5H1052.5M593.5 1023.5H1052.5M593.5 1065.5H1052.5" stroke="#000" stroke-width="1" fill="none" shape-rendering="crispEdges"/>
<path d="M1052.5 646.5V1065.5M598.5 1065.5H1052.5" stroke="#808080" stroke-width="1" fill="none" shape-rendering="crispEdges"/>
<path d="M598.5 646.5V1065.5" stroke="#000" stroke-width="1" shape-rendering="crispEdges"/>
<rect x="593.0" y="855" width="460.0" height="2" fill="#000"/>
<path d="M598.5 856v6M663.5 856v6M728.5 856v6M793.5 856v6M857.5 856v6M922.5 856v6M987.5 856v6M1052.5 856v6" stroke="#000" stroke-width="1" shape-rendering="crispEdges"/>
<text x="587" y="651.5" font-size="15" text-anchor="end">50</text>
<text x="587" y="693.4" font-size="15" text-anchor="end">40</text>
<text x="587" y="735.3" font-size="15" text-anchor="end">30</text>
<text x="587" y="777.2" font-size="15" text-anchor="end">20</text>
<text x="587" y="819.1" font-size="15" text-anchor="end">10</text>
<text x="587" y="861.0" font-size="15" text-anchor="end">0</text>
<text x="587" y="902.9" font-size="15" text-anchor="end">-10</text>
<text x="587" y="944.8" font-size="15" text-anchor="end">-20</text>
<text x="587" y="986.7" font-size="15" text-anchor="end">-30</text>
<text x="587" y="1028.6" font-size="15" text-anchor="end">-40</text>
<text x="587" y="1070.5" font-size="15" text-anchor="end">-50</text>
<text x="598.5" y="884" font-size="15" text-anchor="middle">0</text>
<text x="663.4" y="884" font-size="15" text-anchor="middle">50</text>
<text x="728.2" y="884" font-size="15" text-anchor="middle">100</text>
<text x="793.1" y="884" font-size="15" text-anchor="middle">150</text>
<text x="857.9" y="884" font-size="15" text-anchor="middle">200</text>
<text x="922.8" y="884" font-size="15" text-anchor="middle">250</text>
<text x="987.6" y="884" font-size="15" text-anchor="middle">300</text>
<text x="1052.5" y="884" font-size="15" text-anchor="middle">350</text>
<polyline fill="none" stroke="#000080" stroke-width="1.1" points="598.5,856.0 599.6,853.9 600.7,851.8 601.9,849.8 603.0,847.7 604.1,845.7 605.2,843.7 606.4,841.7 607.5,839.7 608.6,837.7 609.7,835.7 610.9,833.8 612.0,831.8 613.1,829.9 614.2,828.0 615.4,826.1 616.5,824.2 617.6,822.3 618.7,820.5 619.8,818.6 621.0,816.8 622.1,815.0 623.2,813.2 624.3,811.4 625.5,809.6 626.6,807.8 627.7,806.1 628.8,804.3 630.0,802.6 631.1,800.9 632.2,799.2 633.3,797.5 634.4,795.9 635.6,794.2 636.7,792.6 637.8,790.9 638.9,789.3 640.1,787.7 641.2,786.1 642.3,784.5 643.4,783.0 644.6,781.4 645.7,779.9 646.8,778.4 647.9,776.9 649.1,775.4 650.2,773.9 651.3,772.4 652.4,771.0 653.5,769.5 654.7,768.1 655.8,766.7 656.9,765.3 658.0,763.9 659.2,762.5 660.3,761.2 661.4,759.8 662.5,758.5 663.7,757.2 664.8,755.9 665.9,754.6 667.0,753.3 668.1,752.0 669.3,750.8 670.4,749.5 671.5,748.3 672.6,747.1 673.8,745.9 674.9,744.7 676.0,743.5 677.1,742.4 678.3,741.2 679.4,740.1 680.5,739.0 681.6,737.9 682.8,736.8 683.9,735.7 685.0,734.6 686.1,733.6 687.2,732.6 688.4,731.5 689.5,730.5 690.6,729.5 691.7,728.5 692.9,727.6 694.0,726.6 695.1,725.7 696.2,724.7 697.4,723.8 698.5,722.9 699.6,722.0 700.7,721.2 701.8,720.3 703.0,719.5 704.1,718.6 705.2,717.8 706.3,717.0 707.5,716.2 708.6,715.4 709.7,714.6 710.8,713.9 712.0,713.2 713.1,712.4 714.2,711.7 715.3,711.0 716.5,710.3 717.6,709.7 718.7,709.0 719.8,708.4 720.9,707.7 722.1,707.1 723.2,706.5 724.3,705.9 725.4,705.3 726.6,704.8 727.7,704.2 728.8,703.7 729.9,703.1 731.1,702.6 732.2,702.1 733.3,701.7 734.4,701.2 735.5,700.7 736.7,700.3 737.8,699.8 738.9,699.4 740.0,699.0 741.2,698.6 742.3,698.3 743.4,697.9 744.5,697.5 745.7,697.2 746.8,696.9 747.9,696.6 749.0,696.3 750.2,696.0 751.3,695.7 752.4,695.5 753.5,695.2 754.6,695.0 755.8,694.8 756.9,694.6 758.0,694.4 759.1,694.2 760.3,694.1 761.4,693.9 762.5,693.8 763.6,693.7 764.8,693.6 765.9,693.5 767.0,693.4 768.1,693.3 769.3,693.3 770.4,693.2 771.5,693.2 772.6,693.2 773.7,693.2 774.9,693.2 776.0,693.2 777.1,693.3 778.2,693.3 779.4,693.4 780.5,693.5 781.6,693.6 782.7,693.7 783.9,693.8 785.0,693.9 786.1,694.1 787.2,694.3 788.3,694.4 789.5,694.6 790.6,694.8 791.7,695.0 792.8,695.3 794.0,695.5 795.1,695.8 796.2,696.0 797.3,696.3 798.5,696.6 799.6,696.9 800.7,697.3 801.8,697.6 803.0,698.0 804.1,698.3 805.2,698.7 806.3,699.1 807.4,699.5 808.6,699.9 809.7,700.3 810.8,700.8 811.9,701.3 813.1,701.7 814.2,702.2 815.3,702.7 816.4,703.2 817.6,703.7 818.7,704.3 819.8,704.8 820.9,705.4 822.0,706.0 823.2,706.6 824.3,707.2 825.4,707.8 826.5,708.4 827.7,709.1 828.8,709.8 829.9,710.4 831.0,711.1 832.2,711.8 833.3,712.5 834.4,713.3 835.5,714.0 836.7,714.8 837.8,715.5 838.9,716.3 840.0,717.1 841.1,717.9 842.3,718.7 843.4,719.6 844.5,720.4 845.6,721.3 846.8,722.2 847.9,723.1 849.0,724.0 850.1,724.9 851.3,725.8 852.4,726.8 853.5,727.7 854.6,728.7 855.7,729.7 856.9,730.7 858.0,731.7 859.1,732.7 860.2,733.8 861.4,734.8 862.5,735.9 863.6,736.9 864.7,738.0 865.9,739.1 867.0,740.3 868.1,741.4 869.2,742.5 870.4,743.7 871.5,744.9 872.6,746.1 873.7,747.3 874.8,748.5 876.0,749.7 877.1,751.0 878.2,752.2 879.3,753.5 880.5,754.8 881.6,756.1 882.7,757.4 883.8,758.7 885.0,760.0 886.1,761.4 887.2,762.7 888.3,764.1 889.4,765.5 890.6,766.9 891.7,768.3 892.8,769.7 893.9,771.2 895.1,772.6 896.2,774.1 897.3,775.6 898.4,777.1 899.6,778.6 900.7,780.1 901.8,781.7 902.9,783.2 904.1,784.8 905.2,786.4 906.3,788.0 907.4,789.6 908.5,791.2 909.7,792.8 910.8,794.5 911.9,796.1 913.0,797.8 914.2,799.5 915.3,801.2 916.4,802.9 917.5,804.6 918.7,806.4 919.8,808.1 920.9,809.9 922.0,811.7 923.2,813.4 924.3,815.3 925.4,817.1 926.5,818.9 927.6,820.8 928.8,822.6 929.9,824.5 931.0,826.4 932.1,828.3 933.3,830.2 934.4,832.1 935.5,834.1 936.6,836.0 937.8,838.0 938.9,840.0 940.0,842.0 941.1,844.0 942.2,846.0 943.4,848.0 944.5,850.1 945.6,852.2 946.7,854.2 947.9,856.3 949.0,858.4 950.1,860.5 951.2,862.7 952.4,864.8 953.5,867.0 954.6,869.1 955.7,871.3 956.9,873.5 958.0,875.7 959.1,878.0 960.2,880.2 961.3,882.5 962.5,884.7 963.6,887.0 964.7,889.3 965.8,891.6 967.0,893.9 968.1,896.2 969.2,898.6 970.3,901.0 971.5,903.3 972.6,905.7 973.7,908.1 974.8,910.5 975.9,913.0 977.1,915.4 978.2,917.9 979.3,920.3 980.4,922.8 981.6,925.3 982.7,927.8 983.8,930.3 984.9,932.9 986.1,935.4 987.2,938.0 988.3,940.5 989.4,943.1 990.6,945.7 991.7,948.4 992.8,951.0 993.9,953.6 995.0,956.3 996.2,959.0 997.3,961.6 998.4,964.3 999.5,967.0 1000.7,969.8 1001.8,972.5 1002.9,975.3 1004.0,978.0 1005.2,980.8 1006.3,983.6 1007.4,986.4 1008.5,989.2 1009.6,992.0 1010.8,994.9 1011.9,997.7 1013.0,1000.6 1014.1,1003.5 1015.3,1006.4 1016.4,1009.3 1017.5,1012.2 1018.6,1015.2 1019.8,1018.1 1020.9,1021.1 1022.0,1024.1 1023.1,1027.1 1024.3,1030.1 1025.4,1033.1"/>
<path d="M598.5 851.5l4.5 4.5l-4.5 4.5l-4.5 -4.5zM621.0 812.3l4.5 4.5l-4.5 4.5l-4.5 -4.5zM643.4 778.5l4.5 4.5l-4.5 4.5l-4.5 -4.5zM665.9 750.1l4.5 4.5l-4.5 4.5l-4.5 -4.5zM688.4 727.0l4.5 4.5l-4.5 4.5l-4.5 -4.5zM710.8 709.4l4.5 4.5l-4.5 4.5l-4.5 -4.5zM733.3 697.2l4.5 4.5l-4.5 4.5l-4.5 -4.5zM755.8 690.3l4.5 4.5l-4.5 4.5l-4.5 -4.5zM778.2 688.8l4.5 4.5l-4.5 4.5l-4.5 -4.5zM800.7 692.8l4.5 4.5l-4.5 4.5l-4.5 -4.5zM823.2 702.1l4.5 4.5l-4.5 4.5l-4.5 -4.5zM845.6 716.8l4.5 4.5l-4.5 4.5l-4.5 -4.5zM868.1 736.9l4.5 4.5l-4.5 4.5l-4.5 -4.5zM890.6 762.4l4.5 4.5l-4.5 4.5l-4.5 -4.5zM913.0 793.3l4.5 4.5l-4.5 4.5l-4.5 -4.5zM935.5 829.6l4.5 4.5l-4.5 4.5l-4.5 -4.5zM958.0 871.2l4.5 4.5l-4.5 4.5l-4.5 -4.5zM980.4 918.3l4.5 4.5l-4.5 4.5l-4.5 -4.5zM1002.9 970.8l4.5 4.5l-4.5 4.5l-4.5 -4.5zM1025.4 1028.6l4.5 4.5l-4.5 4.5l-4.5 -4.5z" fill="#000080"/>
<text x="800.6" y="532.3" font-size="18" letter-spacing="0.22" font-weight="bold" text-anchor="middle">Trajectory , y vs. x,</text>
<text x="800.6" y="555.1" font-size="18" letter-spacing="0.28" font-weight="bold" text-anchor="middle">x and y scales are not the same, (set by Excel),</text>
<text x="800.6" y="578.0" font-size="18" letter-spacing="0.18" font-weight="bold" text-anchor="middle">appearance of the angle is not the true angle,</text>
<text x="800.6" y="600.8" font-size="18" letter-spacing="0.15" font-weight="bold" text-anchor="middle">entire chart can be stretched to adjust this.</text>
<text x="825" y="1096" font-size="15" font-weight="bold" text-anchor="middle">x, feet</text>
<text transform="translate(553,856) rotate(-90)" font-size="15" font-weight="bold" text-anchor="middle">y, feet</text>
</svg>
<div id="lb"></div><div id="lb2"></div>
<div id="title"><span><i style="font-style:normal;letter-spacing:0.58px">Microsoft Excel - </i><i style="font-style:normal;letter-spacing:0.24px">095_Trajectory_Graph_01.xls</i></span></div>
<div id="menu">
<span style="left:47.5px;letter-spacing:-0.25px"><u>F</u>ile</span>
<span style="left:91.6px;letter-spacing:0px"><u>E</u>dit</span>
<span style="left:139.0px;letter-spacing:0.55px"><u>V</u>iew</span>
<span style="left:196.0px;letter-spacing:0.36px"><u>I</u>nsert</span>
<span style="left:259.8px;letter-spacing:0.24px">F<u>o</u>rmat</span>
<span style="left:333.8px;letter-spacing:0.6px"><u>T</u>ools</span>
<span style="left:395.6px;letter-spacing:-0.1px"><u>D</u>ata</span>
<span style="left:450.2px;letter-spacing:0.9px"><u>W</u>indow</span>
<span style="left:536.7px;letter-spacing:0.6px"><u>H</u>elp</span>
</div>
<div id="tbbg"></div><div id="tb" class="tbar"></div><div id="tb2" class="tbar"></div>
<div id="fbar"><div style="left:2px;top:0;width:148px;height:21px;background:#fff;text-align:center;line-height:20px;font-size:16.67px;letter-spacing:0.3px;padding-right:1px">A52</div><div style="left:244px;top:0;width:842px;height:21px;background:#fff"></div><div style="left:0;top:21px;width:1086px;height:2px;background:linear-gradient(#aec8f7,#c9daf5)"></div></div>
<svg style="left:0;top:0" width="1093" height="125" viewBox="0 0 1093 125">
<defs>
<linearGradient id="gfold" x1="0" y1="0" x2="0" y2="1"><stop offset="0" stop-color="#fbe58a"/><stop offset="1" stop-color="#f0b429"/></linearGradient>
<linearGradient id="gsave" x1="0" y1="0" x2="1" y2="1"><stop offset="0" stop-color="#8d8bea"/><stop offset="1" stop-color="#4a48b8"/></linearGradient>
<linearGradient id="gpage" x1="0" y1="0" x2="1" y2="1"><stop offset="0" stop-color="#ffffff"/><stop offset="0.6" stop-color="#f4f6fb"/><stop offset="1" stop-color="#c9d1e4"/></linearGradient>
<linearGradient id="gprn" x1="0" y1="0" x2="0" y2="1"><stop offset="0" stop-color="#f4f6fa"/><stop offset="1" stop-color="#8e9ab4"/></linearGradient>
<linearGradient id="gcap" x1="0" y1="0" x2="0" y2="1"><stop offset="0" stop-color="#7ba2ea"/><stop offset="0.55" stop-color="#3560bf"/><stop offset="1" stop-color="#0a2b86"/></linearGradient>
<linearGradient id="gbtn" x1="0" y1="0" x2="0" y2="1"><stop offset="0" stop-color="#d6e5fc"/><stop offset="1" stop-color="#a7c2ee"/></linearGradient>
<radialGradient id="ghelp" cx="0.4" cy="0.35" r="0.7"><stop offset="0" stop-color="#5e93f0"/><stop offset="1" stop-color="#1443b4"/></radialGradient>
<radialGradient id="gglobe" cx="0.4" cy="0.3" r="0.8"><stop offset="0" stop-color="#7fb0f5"/><stop offset="1" stop-color="#2d5cc4"/></radialGradient>
<linearGradient id="gdoc" x1="0" y1="0" x2="1" y2="1"><stop offset="0" stop-color="#eef4fd"/><stop offset="1" stop-color="#7fa2de"/></linearGradient>
<linearGradient id="ggreen" x1="0" y1="0" x2="1" y2="1"><stop offset="0" stop-color="#7fb86a"/><stop offset="1" stop-color="#2f6f20"/></linearGradient>
<linearGradient id="gbrush" x1="0" y1="0" x2="1" y2="1"><stop offset="0" stop-color="#fbf3b0"/><stop offset="1" stop-color="#d8bc48"/></linearGradient>
</defs>
<rect x="13" y="36" width="2" height="2" fill="#fff"/><rect x="12" y="35" width="2" height="2" fill="#1b2f6e"/>
<rect x="13" y="41" width="2" height="2" fill="#fff"/><rect x="12" y="40" width="2" height="2" fill="#1b2f6e"/>
<rect x="13" y="46" width="2" height="2" fill="#fff"/><rect x="12" y="45" width="2" height="2" fill="#1b2f6e"/>
<rect x="13" y="51" width="2" height="2" fill="#fff"/><rect x="12" y="50" width="2" height="2" fill="#1b2f6e"/>
<rect x="13" y="56" width="2" height="2" fill="#fff"/><rect x="12" y="55" width="2" height="2" fill="#1b2f6e"/>
<rect x="13" y="71" width="2" height="2" fill="#fff"/><rect x="12" y="70" width="2" height="2" fill="#1b2f6e"/>
<rect x="13" y="76" width="2" height="2" fill="#fff"/><rect x="12" y="75" width="2" height="2" fill="#1b2f6e"/>
<rect x="13" y="81" width="2" height="2" fill="#fff"/><rect x="12" y="80" width="2" height="2" fill="#1b2f6e"/>
<rect x="13" y="86" width="2" height="2" fill="#fff"/><rect x="12" y="85" width="2" height="2" fill="#1b2f6e"/>
<rect x="844" y="71" width="2" height="2" fill="#fff"/><rect x="843" y="70" width="2" height="2" fill="#1b2f6e"/>
<rect x="844" y="76" width="2" height="2" fill="#fff"/><rect x="843" y="75" width="2" height="2" fill="#1b2f6e"/>
<rect x="844" y="81" width="2" height="2" fill="#fff"/><rect x="843" y="80" width="2" height="2" fill="#1b2f6e"/>
<rect x="844" y="86" width="2" height="2" fill="#fff"/><rect x="843" y="85" width="2" height="2" fill="#1b2f6e"/>
<rect x="132" y="71" width="1" height="18" fill="#6a8cd2"/><rect x="133" y="72" width="1" height="18" fill="#fff"/>
<rect x="194" y="71" width="1" height="18" fill="#6a8cd2"/><rect x="195" y="72" width="1" height="18" fill="#fff"/>
<rect x="256" y="71" width="1" height="18" fill="#6a8cd2"/><rect x="257" y="72" width="1" height="18" fill="#fff"/>
<rect x="388" y="71" width="1" height="18" fill="#6a8cd2"/><rect x="389" y="72" width="1" height="18" fill="#fff"/>
<rect x="478" y="71" width="1" height="18" fill="#6a8cd2"/><rect x="479" y="72" width="1" height="18" fill="#fff"/>
<rect x="638" y="71" width="1" height="18" fill="#6a8cd2"/><rect x="639" y="72" width="1" height="18" fill="#fff"/>
<rect x="9" y="5" width="20" height="20" fill="url(#ggreen)"/><rect x="9.5" y="5.5" width="19" height="19" fill="none" stroke="#3d7a2c"/>
<rect x="11" y="7" width="15" height="15" fill="#f6faf4"/>
<path d="M13 10h4l2 2.6 2-2.6h4l-4 4.5 4 4.5h-4l-2-2.6-2 2.6h-4l4-4.5z" fill="#3f9640" fill-opacity="0.9"/>
<path d="M24.5 34.5h15l5 5v20h-20z" fill="url(#gdoc)"/><path d="M24.5 59.5h20v-20" fill="none" stroke="#2e4a78" stroke-width="1.2"/>
<path d="M39.5 34.5v5h5z" fill="#f4f8fe" stroke="#2e4a78" stroke-width="0.9"/>
<path d="M27 56.5h14M36 42h5M36 46h5M36 50v3h4" stroke="#f2f6fd" stroke-width="1.5" fill="none"/>
<rect x="19" y="35" width="16" height="17" fill="#3f7f2c"/><rect x="20" y="37" width="13" height="13" fill="#fff"/>
<path d="M21.5 40h3.5l1.8 2.2 1.8-2.2h3.4l-3.4 3.8 3.4 3.8h-3.4l-1.8-2.2-1.8 2.2h-3.5l3.5-3.8z" fill="#3c8a34"/>
<path d="M24.5 71.5h9l4 4v12.5h-13z" fill="url(#gpage)" stroke="#8d97ad" stroke-width="1"/>
<path d="M25 88.2h12.8v-12" fill="none" stroke="#3d4d66" stroke-width="1.4"/><path d="M33.5 71.5v4h4z" fill="#d6dcea" stroke="#5a6a86" stroke-width="0.8"/>
<path d="M50.5 87.5v-13.5l1-1h5l1.5 1.5h6.5v4" fill="#ecd98a" stroke="#8c7b45" stroke-width="1"/>
<path d="M50.5 87.8l4-8.3h15l-4.5 8.3z" fill="url(#gfold)" stroke="#8c7b45" stroke-width="1"/>
<path d="M61.5 74.5c2-2.8 5.5-3 7-0.5" fill="none" stroke="#8a9cc0" stroke-width="1.3"/><path d="M70.5 72v5h-4.5z" fill="#5a74a6"/>
<path d="M79.5 71.5h16l1.5 1.5v15.5h-17.5z" fill="url(#gsave)" stroke="#3f3c9c" stroke-width="1"/>
<rect x="83" y="72" width="9.5" height="7.5" fill="#f4f5fb"/><rect x="92.5" y="72" width="1.2" height="7.5" fill="#35338a"/><rect x="84.5" y="82" width="7.5" height="6" fill="#23234a"/><rect x="88" y="83" width="3" height="4" fill="#e8e8f4"/>
<path d="M110.5 85v-8c0-4.5 3-6.5 7.5-6.5s7.5 2 7.5 6.5v8z" fill="#f1f3f8" stroke="#97a2ba" stroke-width="1"/><path d="M111.5 75.5h13" stroke="#c5ccdc" stroke-width="1"/><path d="M125 77v8" stroke="#6c7a96" stroke-width="1.2"/>
<rect x="120.5" y="77" width="3" height="3" fill="#e04a2a"/>
<rect x="106.5" y="81.5" width="17" height="8" fill="#e9edf5" stroke="#5c6c8a" stroke-width="1"/><path d="M109 84.5h5M109 87h5M116 84.5h6M116 87h6" stroke="#8fa0c2" stroke-width="1"/>
<path d="M144.5 77.5l2.5-6h10l-2 6z" fill="#f8f9fc" stroke="#8f99ae" stroke-width="1"/><path d="M148 73.2h7.5M147.3 75.2h7.5" stroke="#a8b0c2" stroke-width="0.9"/>
<path d="M140.8 81l3.2-4h13.5l1.3 1.8v7l-2.3 2.7h-14.7l-1-1.5z" fill="#aab4c8" stroke="#67738c" stroke-width="1"/>
<path d="M141.5 81h14.5v5h-14.5z" fill="#f2f4f9"/><path d="M156 81l2.5-2.2v6.5l-2.5 2.5z" fill="#8e99b2"/>
<rect x="151.5" y="82" width="3.8" height="3.8" fill="#28c840" stroke="#10902a" stroke-width="0.6"/>
<path d="M169.5 71.5h9l4 4v12.5h-13z" fill="url(#gpage)" stroke="#8d97ad" stroke-width="1"/><path d="M170 88.2h12.5" stroke="#4a5972" stroke-width="1.3"/><path d="M178.5 71.5v4h4z" fill="#44546e"/>
<path d="M182 84l4.5 4" stroke="#e0902c" stroke-width="3.6" stroke-linecap="round"/>
<circle cx="178.5" cy="80.5" r="4.3" fill="#e8eef9" fill-opacity="0.92" stroke="#7d8aa6" stroke-width="1.3"/>
<text x="202.5" y="76" font-family="Liberation Sans,sans-serif" font-size="7.6" font-weight="bold" fill="#333" textLength="16.5" lengthAdjust="spacingAndGlyphs">ABC</text>
<path d="M204.5 81.8l5 4.8 11.5-13.6" fill="none" stroke="#3f6acb" stroke-width="3" stroke-linejoin="miter"/>
<rect x="230.5" y="72.5" width="6" height="15.5" fill="#8c7de0" stroke="#5b4bb0" stroke-width="1"/><path d="M231 75.5h5M231 85h5" stroke="#c9c0f5" stroke-width="1"/>
<rect x="236.5" y="71.5" width="8.5" height="16.5" fill="#e8c44a" stroke="#8f7a3a" stroke-width="1"/><path d="M237 74.5h8" stroke="#fbe9a0" stroke-width="1.2"/>
<path d="M243.5 84l5 4.5" stroke="#e8a82a" stroke-width="3.4" stroke-linecap="round"/>
<circle cx="240.5" cy="80.5" r="4.2" fill="#eef3fb" stroke="#8b93a8" stroke-width="1.3"/>
<path d="M270.3 71.5l4.7 11M277.3 71.5l-4.7 11" stroke="#8f98aa" stroke-width="2.1" stroke-linecap="round"/>
<ellipse cx="270.6" cy="85" rx="2.4" ry="3" fill="#6f94e6" stroke="#335cc0" stroke-width="1.7" transform="rotate(28 270.6 85)"/><ellipse cx="276.8" cy="85" rx="2.4" ry="3" fill="#6f94e6" stroke="#335cc0" stroke-width="1.7" transform="rotate(-28 276.8 85)"/>
<path d="M292.5 71.5h6.5l3 3v8.5h-9.5z" fill="#f6f8fc" stroke="#8f98ac" stroke-width="1"/><path d="M294.5 75.5h5M294.5 78h5M294.5 80.5h4" stroke="#8fb0e4" stroke-width="1"/>
<path d="M300.5 75.5h7l3.5 3.5v9h-10.5z" fill="#f6f8fc" stroke="#3558b0" stroke-width="1.2"/><path d="M302.5 80.5h6M302.5 83h6M302.5 85.5h6" stroke="#8fb0e4" stroke-width="1"/><path d="M307.5 75.5v3.5h3.5" fill="none" stroke="#3558b0"/>
<rect x="319.5" y="73.5" width="14" height="13.5" fill="#b9c8e4" stroke="#a4b5d6" stroke-width="1"/><rect x="323.5" y="71.5" width="6" height="3.5" fill="#d6e0f2" stroke="#a4b5d6"/>
<path d="M327.5 80.5h7.5l3 3v4.5h-10.5z" fill="#cdd9ee" stroke="#a7b7d8" stroke-width="1"/><path d="M329.5 83.5h5M329.5 85.5h6" stroke="#e6ecf8" stroke-width="1"/>
<path d="M346 78h9l-4.5 5z" fill="#8a8a8a"/>
<path d="M422 78h9l-4.5 5z" fill="#8a8a8a"/>
<path d="M464 78h9l-4.5 5z" fill="#8a8a8a"/>
<path d="M568 78h9l-4.5 5z" fill="#000"/>
<path d="M164 106h9l-4.5 5z" fill="#000"/>
<path d="M377.5 74.5l3-3" stroke="#5548c0" stroke-width="3.4" stroke-linecap="round"/>
<path d="M371.5 73.5l5.5 6.5" stroke="#a9afbc" stroke-width="3.8"/><path d="M372.5 72.8l5.5 6.5" stroke="#d8dce4" stroke-width="1"/>
<path d="M362.5 79.5l7.5-5 6 7.5-4.5 6c-3-0.8-7-4.5-9-8.5z" fill="url(#gbrush)" stroke="#a09248" stroke-width="0.8"/>
<path d="M403 78.5c2.5-5.5 9.5-4.5 9 1c-0.3 3-2.3 5.3-4.5 7" fill="none" stroke="#a6badf" stroke-width="3" stroke-linecap="round"/><path d="M396.8 73.5v8h8z" fill="#a6badf"/>
<path d="M447.5 78.5c-2.5-5.5-9.5-4.5-9 1c0.3 3 2.3 5.3 4.5 7" fill="none" stroke="#a6badf" stroke-width="3" stroke-linecap="round"/><path d="M453.7 73.5v8h-8z" fill="#a6badf"/>
<circle cx="493.5" cy="77" r="6.8" fill="url(#gglobe)" stroke="#4a6cb0" stroke-width="0.5"/><path d="M490 71.5c3-2 6.5-1 7 0.5c-1 1.5-2.2 1-2.7 2.5c1 1.5 3.2 1.5 3.2 3.5c-1 2-2.7 2.5-3.7 4.2c-1.5-1.5-1-3-2.5-4.5c-1.5-1-2.7-1.5-3.2-3c0-1.5 0.9-2.7 1.9-3.2z" fill="#45bb45"/>
<ellipse cx="492" cy="85.8" rx="4.2" ry="2.9" fill="none" stroke="#566b92" stroke-width="2"/><ellipse cx="502" cy="85.8" rx="4.2" ry="2.9" fill="none" stroke="#566b92" stroke-width="2"/><path d="M493.5 85.8h7" stroke="#eef2f9" stroke-width="2"/>
<text x="517" y="84.5" font-family="Liberation Serif,serif" font-style="italic" font-size="16.5" fill="#333" stroke="#333" stroke-width="0.3">f</text><text x="523.5" y="84.5" font-family="Liberation Serif,serif" font-style="italic" font-weight="bold" font-size="10.5" fill="#222">x</text>
<text x="235" y="112.5" font-family="Liberation Serif,serif" font-style="italic" font-size="14.5" fill="#111" stroke="#111" stroke-width="0.25">f</text><text x="239.5" y="112.5" font-family="Liberation Serif,serif" font-style="italic" font-weight="bold" font-size="10" fill="#111">x</text>
<text x="543.7" y="84.7" font-family="Liberation Serif,serif" font-weight="bold" font-size="17.5" fill="#111">Σ</text>
<text x="584" y="78.5" font-family="Liberation Serif,serif" font-weight="bold" font-size="12" fill="#3355a8">A</text><text x="584.5" y="88.3" font-family="Liberation Serif,serif" font-weight="bold" font-size="12" fill="#b23434">Z</text>
<path d="M599.5 70v15" stroke="#000" stroke-width="1.2"/><path d="M596 83h7l-3.5 5.5z" fill="#000"/>
<text x="612.5" y="78.5" font-family="Liberation Serif,serif" font-weight="bold" font-size="12" fill="#b23434">Z</text><text x="612" y="88.3" font-family="Liberation Serif,serif" font-weight="bold" font-size="12" fill="#3355a8">A</text>
<path d="M627.5 70v15" stroke="#000" stroke-width="1.2"/><path d="M624 83h7l-3.5 5.5z" fill="#000"/>
<path d="M646.5 89v-15l3-3.5v15.5h15.5l-3 3z" fill="#dfe4ee" stroke="#6d7a94" stroke-width="1"/>
<rect x="648.5" y="78" width="4.5" height="9" fill="#3f74e0" stroke="#274fa8" stroke-width="0.6"/><rect x="654" y="71.5" width="5" height="15.5" fill="#f0c82a" stroke="#a8861a" stroke-width="0.6"/><rect x="660" y="74.5" width="4.5" height="12.5" fill="#e0482a" stroke="#a02c18" stroke-width="0.6"/>
<path d="M680 73l3-3h9v6.5l-3 2.5h-9z" fill="#ead47a" stroke="#a89648" stroke-width="0.8"/><path d="M680 73h9l3-3M689 73v6" fill="none" stroke="#c4ae58" stroke-width="0.7"/>
<rect x="685" y="78.5" width="10" height="10" rx="4.5" fill="#b9c2d2" stroke="#8690a4" stroke-width="0.8"/><ellipse cx="688" cy="83.5" rx="2.5" ry="4.2" fill="#dde2ec"/>
<text x="673" y="88.5" font-family="Liberation Sans,sans-serif" font-weight="bold" font-style="italic" font-size="16" fill="#8680dc" stroke="#6a62c0" stroke-width="0.6">A</text>
<rect x="699" y="68" width="92" height="25" fill="#fff"/><rect x="775" y="69" width="15" height="23" fill="url(#gbtn)"/>
<circle cx="806" cy="79.5" r="8.6" fill="#dbe6f8" stroke="#a4b9e0" stroke-width="1"/><circle cx="806" cy="79.5" r="6.8" fill="url(#ghelp)"/>
<text x="806" y="84.2" font-family="Liberation Sans,sans-serif" font-weight="bold" font-size="12.5" fill="#fff" text-anchor="middle">?</text>
<path d="M821 66h11.5q3.5 0 3.5 3.5v23.5q0 3.5-3.5 3.5h-11.5z" fill="url(#gcap)"/>
<rect x="825" y="84.5" width="9" height="1.8" fill="#fff"/><path d="M825 88h9l-4.5 5z" fill="#000"/><path d="M830.5 92.5l4-4.5" stroke="#fff" stroke-width="1.2"/>
<rect x="849" y="68" width="203" height="25" fill="#fff"/><rect x="1037" y="69" width="14" height="23" fill="url(#gbtn)"/><rect x="1054" y="68" width="39" height="25" fill="#fff"/>
<path d="M1040 78h9l-4.5 5z" fill="#000"/>
<path d="M778 78h9l-4.5 5z" fill="#000"/>
</svg>
<div class="ui" style="left:702px;top:70px">100%</div><div class="ui" style="left:852px;top:70px">Arial</div><div class="ui" style="left:1058px;top:70px">10</div>
</div></body></html>
